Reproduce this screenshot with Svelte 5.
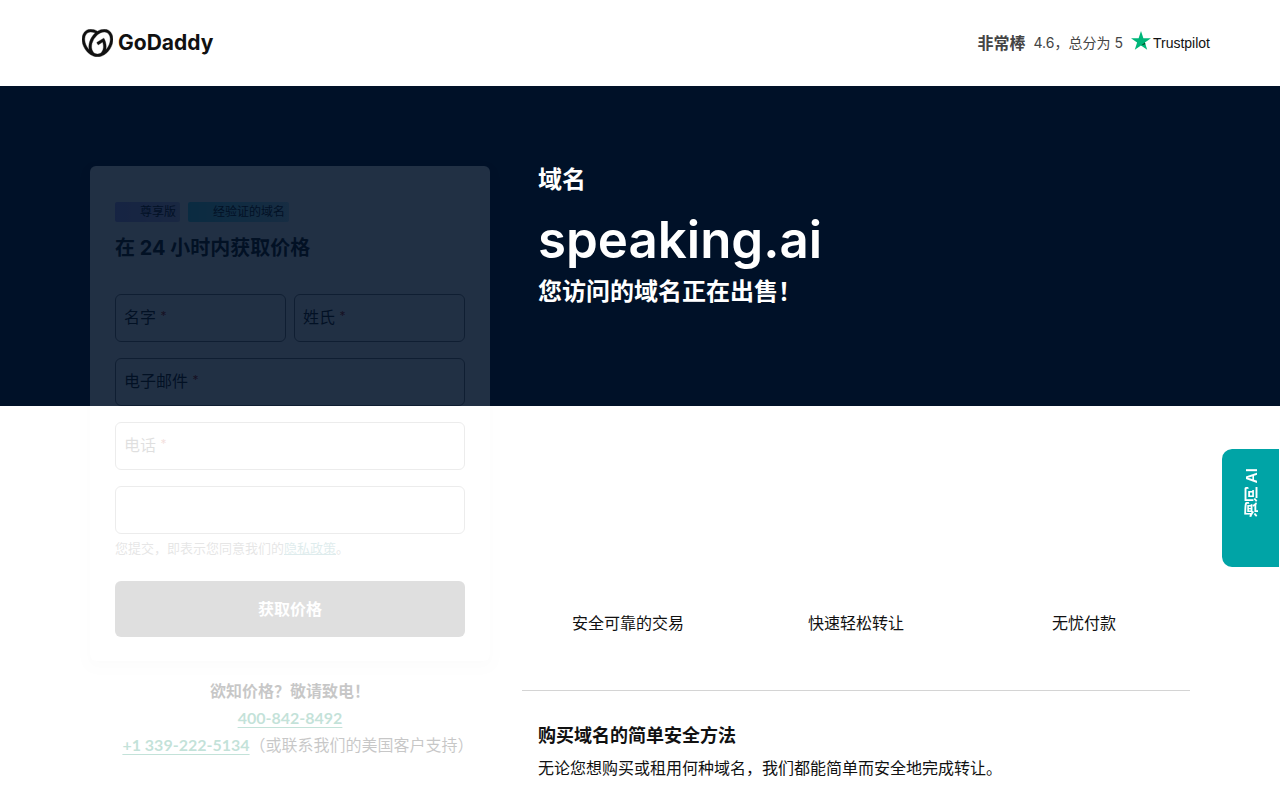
<script>
const fields = [
  {id: 'first', label: '名字', type: 'text', half: true},
  {id: 'last', label: '姓氏', type: 'text', half: true},
  {id: 'email', label: '电子邮件', type: 'email'},
  {id: 'phone', label: '电话', type: 'tel'},
];
const features = ['安全可靠的交易', '快速轻松转让', '无忧付款'];

let values = $state({first: '', last: '', email: '', phone: '', note: ''});

function submit(e) {
    e.preventDefault();
}
</script>

<header>
  <a class="logo" href="#home">
    <svg viewBox="0 1.3 24 21.4" width="31" height="28" aria-hidden="true">
      <path fill="currentColor" stroke="currentColor" stroke-width=".3" d="M20.702 2.29c-2.494-1.554-5.778-1.187-8.706.654C9.076 1.104 5.79.736 3.3 2.29c-3.941 2.463-4.42 8.806-1.07 14.167 2.47 3.954 6.333 6.269 9.77 6.226 3.439.043 7.301-2.273 9.771-6.226 3.347-5.361 2.872-11.704-1.069-14.167zM4.042 15.328a12.838 12.838 0 01-1.546-3.541 10.12 10.12 0 01-.336-3.338c.15-1.98.956-3.524 2.27-4.345 1.315-.822 3.052-.87 4.903-.137.281.113.556.24.825.382A15.11 15.11 0 007.5 7.54c-2.035 3.255-2.655 6.878-1.945 9.765a13.247 13.247 0 01-1.514-1.98zm17.465-3.54a12.866 12.866 0 01-1.547 3.54 13.25 13.25 0 01-1.513 1.984c.635-2.589.203-5.76-1.353-8.734a.39.39 0 00-.563-.153l-4.852 3.032a.397.397 0 00-.126.546l.712 1.139a.395.395 0 00.547.126l3.145-1.965c.101.306.203.606.28.916.296 1.086.41 2.214.335 3.337-.15 1.982-.956 3.525-2.27 4.347a4.437 4.437 0 01-2.25.65h-.101a4.432 4.432 0 01-2.25-.65c-1.314-.822-2.121-2.365-2.27-4.347-.073-1.123.04-2.25.335-3.337a13.212 13.212 0 014.05-6.482 9.96 9.96 0 012.849-1.765c1.846-.733 3.584-.685 4.9.137 1.316.821 2.122 2.365 2.271 4.345a10.146 10.146 0 01-.33 3.334z"/>
    </svg>
    <span>GoDaddy</span>
  </a>
  <a class="rating" href="#trustpilot">
    <strong>非常棒</strong>
    <span>4.6，总分为 5</span>
    <span class="trustpilot">
      <svg viewBox="0 0 20 19" width="20" height="19" aria-hidden="true">
        <path fill="#00b67a" d="M10 0l2.4 7.2H20l-6.1 4.4 2.3 7.2L10 14.4l-6.2 4.4 2.3-7.2L0 7.2h7.6z"/>
        <path fill="#005128" d="M14.4 13.2l-.5-1.6L10 14.4z"/>
      </svg>
      Trustpilot
    </span>
  </a>
</header>

<main>
  <div class="container">
    <aside>
      <form class="card" onsubmit={submit}>
        <div class="badges">
          <span class="badge premium">尊享版</span>
          <span class="badge verified">经验证的域名</span>
        </div>
        <h2>在 24 小时内获取价格</h2>
        <div class="fields">
          {#each fields as f (f.id)}
            <div class="field" class:half={f.half}>
              <input id={f.id} type={f.type} bind:value={values[f.id]} required>
              {#if !values[f.id]}<label for={f.id}>{f.label} <sup>*</sup></label>{/if}
            </div>
          {/each}
          <div class="field">
            <input type="text" aria-label="备注" bind:value={values.note}>
          </div>
        </div>
        <p class="terms">您提交，即表示您同意我们的<a href="#privacy">隐私政策</a>。</p>
        <button class="submit">获取价格</button>
      </form>
      <div class="call">
        <p><strong>欲知价格？敬请致电！</strong></p>
        <p><a href="tel:4008428492">400-842-8492</a></p>
        <p class="support"><a href="tel:+13392225134">+1 339-222-5134</a>（或联系我们的美国客户支持）</p>
      </div>
    </aside>

    <div class="info">
      <section class="hero">
        <p>域名</p>
        <h1>speaking.ai</h1>
        <p>您访问的域名正在出售！</p>
      </section>
      <ul class="features">
        {#each features as name}
          <li>{name}</li>
        {/each}
      </ul>
      <section class="about">
        <h3>购买域名的简单安全方法</h3>
        <p>无论您想购买或租用何种域名，我们都能简单而安全地完成转让。</p>
      </section>
    </div>
  </div>
</main>

<button class="ask">询问 AI</button>

<style>
:global(body) {
  background: #fff;
  color: #111;
  font: 16px/24px Inter, "Noto Sans CJK SC", sans-serif;
  overflow: hidden;
}
h1, h2, h3, p, ul {
  margin: 0;
  padding: 0;
}
input, button {
  font: inherit;
  box-sizing: border-box;
}
header {
  display: flex;
  align-items: center;
  justify-content: space-between;
  max-width: 1128px;
  height: 86px;
  margin: 0 auto;
  padding-left: 12px;
}
.logo {
  display: flex;
  align-items: center;
  gap: 5px;
  color: #111;
  font-size: 21px;
  font-weight: 700;
  text-decoration: none;
}
.rating {
  display: flex;
  align-items: center;
  gap: 8px;
  color: #444;
  font-size: 14px;
  text-decoration: none;
}
.rating strong {
  font-size: 16px;
}
.trustpilot {
  display: flex;
  align-items: center;
  gap: 2px;
  color: #111;
  font-family: "Liberation Sans", sans-serif;
  font-size: 14px;
}
.trustpilot svg {
  margin-bottom: 6px;
}
/* dark band behind the top of both columns */
main {
  background: linear-gradient(#001128, #001128) top / 100% 320px no-repeat;
}
.container {
  display: grid;
  grid-template-columns: 400px 1fr;
  gap: 32px;
  max-width: 1100px;
  margin: 0 auto;
  padding-top: 80px;
}
.card {
  padding: 36px 25px 24px;
  border-radius: 6px;
  background: #fff;
  box-shadow: 0 4px 12px rgba(0, 0, 0, 0.1);
  opacity: 0.13;
}
.badges {
  display: flex;
  gap: 8px;
}
.badge {
  padding: 0 4px 0 25px;
  border-radius: 2px;
  font-size: 12px;
  line-height: 20px;
}
.premium {
  background: linear-gradient(90deg, #a8a0f4, #c4c0f0);
}
.verified {
  background: linear-gradient(90deg, #50d8e8, #b0e4f4);
}
h2 {
  margin: 12px 0 31px;
  font-size: 20px;
  line-height: 29px;
}
.fields {
  display: grid;
  grid-template-columns: 1fr 1fr;
  gap: 16px 8px;
}
.field {
  position: relative;
  grid-column: span 2;
}
.half {
  grid-column: span 1;
}
input {
  display: block;
  width: 100%;
  height: 48px;
  padding: 0 9px;
  border: 1px solid #767676;
  border-radius: 6px;
  background: #fff;
}
label {
  position: absolute;
  top: 11px;
  left: 9px;
}
sup {
  color: #ae1302;
  font-size: 12px;
  line-height: 0;
  vertical-align: 3px;
}
.terms {
  margin: 4px 0 23px;
  color: #444;
  font-size: 13px;
  line-height: 20px;
}
.terms a {
  color: #09757a;
}
.submit {
  display: block;
  width: 100%;
  height: 56px;
  border: 0;
  border-radius: 6px;
  background: #111;
  color: #fff;
  font-weight: 700;
}
.call {
  padding-top: 17px;
  line-height: 27px;
  text-align: center;
  white-space: nowrap;
  opacity: 0.23;
}
.call a {
  color: #00855f;
  font-family: Lato, sans-serif;
  font-weight: 700;
  line-height: 1;
  text-underline-offset: 3px;
}
.support {
  padding-left: 16px;
}
.hero {
  padding-left: 16px;
  color: #fff;
  font-size: 24px;
  font-weight: 700;
  line-height: 28px;
}
h1 {
  padding: 14px 0 6px;
  font-size: 51px;
  font-weight: 600;
  line-height: 64px;
}
.features {
  display: grid;
  grid-template-columns: repeat(3, 1fr);
  margin: 305px -8px 0;
  padding-bottom: 55px;
  list-style: none;
  text-align: center;
}
.about {
  padding: 33px 16px;
  border-top: 1px solid #d4d4d4;
}
h3 {
  margin-bottom: 8px;
  font-size: 18px;
}
.ask {
  position: fixed;
  top: 449px;
  right: 1px;
  width: 57px;
  height: 118px;
  padding: 50px 4px 0 0;
  border: 0;
  border-radius: 0 10px 10px 0;
  background: #00a4a6;
  color: #fff;
  font-size: 15px;
  font-weight: 600;
  text-align: left;
  writing-mode: vertical-rl;
  transform: rotate(180deg);
}
</style>
